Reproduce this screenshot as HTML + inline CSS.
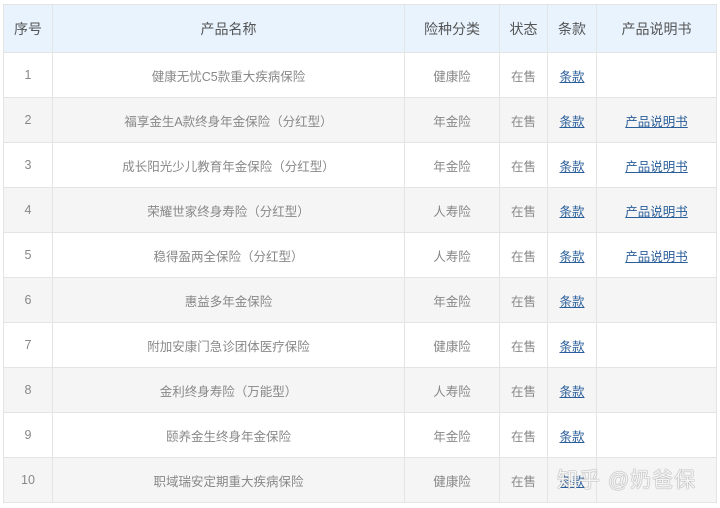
<!DOCTYPE html><html><head><meta charset="utf-8"><style>
body{margin:0;width:720px;height:508px;background:#fff;font-family:"Liberation Sans","Noto Sans CJK SC",sans-serif;position:relative;overflow:hidden}
table{position:absolute;left:3px;top:4px;border-collapse:collapse;table-layout:fixed;width:713px}
td,th{border:1px solid #e4e4e4;text-align:center;color:#888;font-size:12.5px;font-weight:normal;padding:0;height:44px}
th{background:#e8f3fd;color:#555;font-size:14px;height:47px}
tr:nth-child(odd) td{background:#f5f5f5}
a{color:#2a5e9a;text-decoration:underline}
.wm{position:absolute;left:557px;top:464px;font-size:21px;color:#f4f4f4;text-shadow:0 0 1px #888,0 0 1px #999;letter-spacing:1px}
</style></head><body>
<table>
<colgroup><col style="width:49px"><col style="width:352px"><col style="width:95px"><col style="width:48px"><col style="width:49px"><col style="width:120px"></colgroup>
<tr><th>序号</th><th>产品名称</th><th>险种分类</th><th>状态</th><th>条款</th><th>产品说明书</th></tr>
<tr><td>1</td><td>健康无忧C5款重大疾病保险</td><td>健康险</td><td>在售</td><td><a>条款</a></td><td></td></tr>
<tr><td>2</td><td>福享金生A款终身年金保险（分红型）</td><td>年金险</td><td>在售</td><td><a>条款</a></td><td><a>产品说明书</a></td></tr>
<tr><td>3</td><td>成长阳光少儿教育年金保险（分红型）</td><td>年金险</td><td>在售</td><td><a>条款</a></td><td><a>产品说明书</a></td></tr>
<tr><td>4</td><td>荣耀世家终身寿险（分红型）</td><td>人寿险</td><td>在售</td><td><a>条款</a></td><td><a>产品说明书</a></td></tr>
<tr><td>5</td><td>稳得盈两全保险（分红型）</td><td>人寿险</td><td>在售</td><td><a>条款</a></td><td><a>产品说明书</a></td></tr>
<tr><td>6</td><td>惠益多年金保险</td><td>年金险</td><td>在售</td><td><a>条款</a></td><td></td></tr>
<tr><td>7</td><td>附加安康门急诊团体医疗保险</td><td>健康险</td><td>在售</td><td><a>条款</a></td><td></td></tr>
<tr><td>8</td><td>金利终身寿险（万能型）</td><td>人寿险</td><td>在售</td><td><a>条款</a></td><td></td></tr>
<tr><td>9</td><td>颐养金生终身年金保险</td><td>年金险</td><td>在售</td><td><a>条款</a></td><td></td></tr>
<tr><td>10</td><td>职域瑞安定期重大疾病保险</td><td>健康险</td><td>在售</td><td><a>条款</a></td><td></td></tr>
</table>
<div class="wm">知乎 @奶爸保</div>
</body></html>
